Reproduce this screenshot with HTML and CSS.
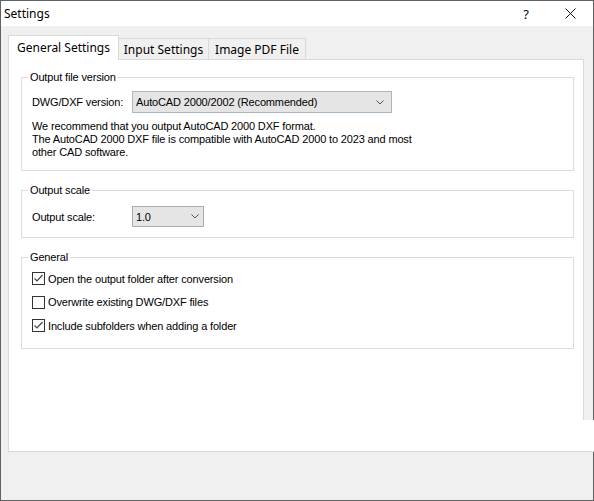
FILE: index.html
```html
<!DOCTYPE html>
<html>
<head>
<meta charset="utf-8">
<title>Settings</title>
<link rel="stylesheet" href="styles.css">
</head>
<body>
<div class="window">
  <div class="titlebar">
    <span class="title">Settings</span>
    <span class="help">?</span>
    <span class="close"><svg width="11" height="11" viewBox="0 0 11 11"><path d="M0.5 0.5 L10.5 10.5 M10.5 0.5 L0.5 10.5" stroke="#111" stroke-width="1" fill="none"/></svg></span>
  </div>
  <div class="content">
    <div class="tabs">
      <div class="tab active">General Settings</div>
      <div class="tab tab-input">Input Settings</div>
      <div class="tab tab-pdf">Image PDF File</div>
    </div>
    <div class="panel">
      <fieldset class="group group-version">
        <legend>Output file version</legend>
        <div class="field-row">
          <span class="field-label">DWG/DXF version:</span>
          <div class="combo combo-wide"><span>AutoCAD 2000/2002 (Recommended)</span><svg class="chev" width="8" height="5" viewBox="0 0 8 5"><path d="M0.5 0.5 L4 4 L7.5 0.5" stroke="#555" stroke-width="1" fill="none"/></svg></div>
        </div>
        <p class="note">We recommend that you output AutoCAD 2000 DXF format.<br>The AutoCAD 2000 DXF file is compatible with AutoCAD 2000 to 2023 and most<br>other CAD software.</p>
      </fieldset>
      <fieldset class="group group-scale">
        <legend>Output scale</legend>
        <div class="field-row">
          <span class="field-label">Output scale:</span>
          <div class="combo combo-small"><span>1.0</span><svg class="chev" width="8" height="5" viewBox="0 0 8 5"><path d="M0.5 0.5 L4 4 L7.5 0.5" stroke="#555" stroke-width="1" fill="none"/></svg></div>
        </div>
      </fieldset>
      <fieldset class="group group-general">
        <legend>General</legend>
        <div class="check-row">
          <svg class="box" width="13" height="13" viewBox="0 0 13 13"><rect x="0.5" y="0.5" width="12" height="12" fill="#fff" stroke="#333"/><path d="M2.5 6.5 L5 9 L10.5 3" stroke="#444" stroke-width="1.2" fill="none"/></svg>
          <span>Open the output folder after conversion</span>
        </div>
        <div class="check-row">
          <svg class="box" width="13" height="13" viewBox="0 0 13 13"><rect x="0.5" y="0.5" width="12" height="12" fill="#fff" stroke="#333"/></svg>
          <span>Overwrite existing DWG/DXF files</span>
        </div>
        <div class="check-row">
          <svg class="box" width="13" height="13" viewBox="0 0 13 13"><rect x="0.5" y="0.5" width="12" height="12" fill="#fff" stroke="#333"/><path d="M2.5 6.5 L5 9 L10.5 3" stroke="#444" stroke-width="1.2" fill="none"/></svg>
          <span>Include subfolders when adding a folder</span>
        </div>
      </fieldset>
    </div>
  </div>
  <div class="patch"></div>
</div>
</body>
</html>
```

FILE: styles.css
```css
* { box-sizing: border-box; }
html, body { margin: 0; padding: 0; }
body {
  width: 594px;
  height: 501px;
  overflow: hidden;
  background: #f0f0f0;
  font-family: "Liberation Sans", Arial, sans-serif;
  font-size: 11px;
  letter-spacing: -0.15px;
  color: #000;
}
.window {
  position: relative;
  width: 594px;
  height: 501px;
  border: 1px solid #616161;
  background: #f0f0f0;
  display: flex;
  flex-direction: column;
}
.titlebar {
  height: 25px;
  background: #fff;
  display: flex;
  align-items: center;
  font-family: "Noto Sans", sans-serif;
  font-size: 12px;
  letter-spacing: 0;
}
.title { flex: 1; padding-left: 3px; }
.help { width: 44px; text-align: center; font-size: 13px; }
.close { width: 45px; display: flex; justify-content: center; }
.close svg { display: block; }
.content { padding: 9px 9px 0 7px; }
.tabs {
  display: flex;
  align-items: flex-end;
  height: 24px;
  font-family: "Noto Sans", sans-serif;
  font-size: 12px;
  letter-spacing: 0;
}
.tab {
  height: 21px;
  border: 1px solid #d9d9d9;
  border-bottom: none;
  background: #f0f0f0;
  display: flex;
  align-items: center;
  justify-content: center;
}
.tab.active {
  width: 111px;
  height: 25px;
  margin-bottom: -1px;
  padding-bottom: 2px;
  background: #fff;
  position: relative;
  z-index: 1;
}
.tab-input { width: 90px; border-left: none; }
.tab-pdf { width: 97px; border-left: none; }
.panel {
  height: 393px;
  border: 1px solid #d9d9d9;
  background: #fff;
  padding: 11px 9px 0 12px;
}
.group {
  margin: 0;
  min-width: 0;
  border: 1px solid #dcdcdc;
  padding: 7px 9px 11px 10px;
}
.group + .group { margin-top: 13px; }
.group legend {
  padding: 0 2px;
  margin-left: -4px;
  line-height: 13px;
}
.group-scale { padding-top: 9px; padding-bottom: 10px; }
.group-general { padding-top: 3px; padding-bottom: 10px; }
.field-row { display: flex; align-items: center; }
.field-label { width: 100px; }
.combo {
  display: flex;
  align-items: center;
  height: 22px;
  padding-left: 3px;
  border: 1px solid #a9b6c4;
  background: #e5e5e5;
}
.combo .chev { margin-left: auto; display: block; }
.combo-wide { width: 260px; }
.combo-wide .chev { margin-right: 7px; }
.combo-small { width: 72px; height: 21px; border-color: #adadad; }
.combo-small .chev { margin-right: 4px; }
.note {
  margin: 7px 0 0 0;
  line-height: 13px;
}
.check-row {
  height: 23.5px;
  display: flex;
  align-items: center;
}
.box { display: block; margin-right: 3px; flex: none; }
.patch {
  position: absolute;
  right: -1px;
  top: 419px;
  width: 11px;
  height: 32px;
  background: #fff;
  border-bottom: 1px solid #d9d9d9;
}
```
